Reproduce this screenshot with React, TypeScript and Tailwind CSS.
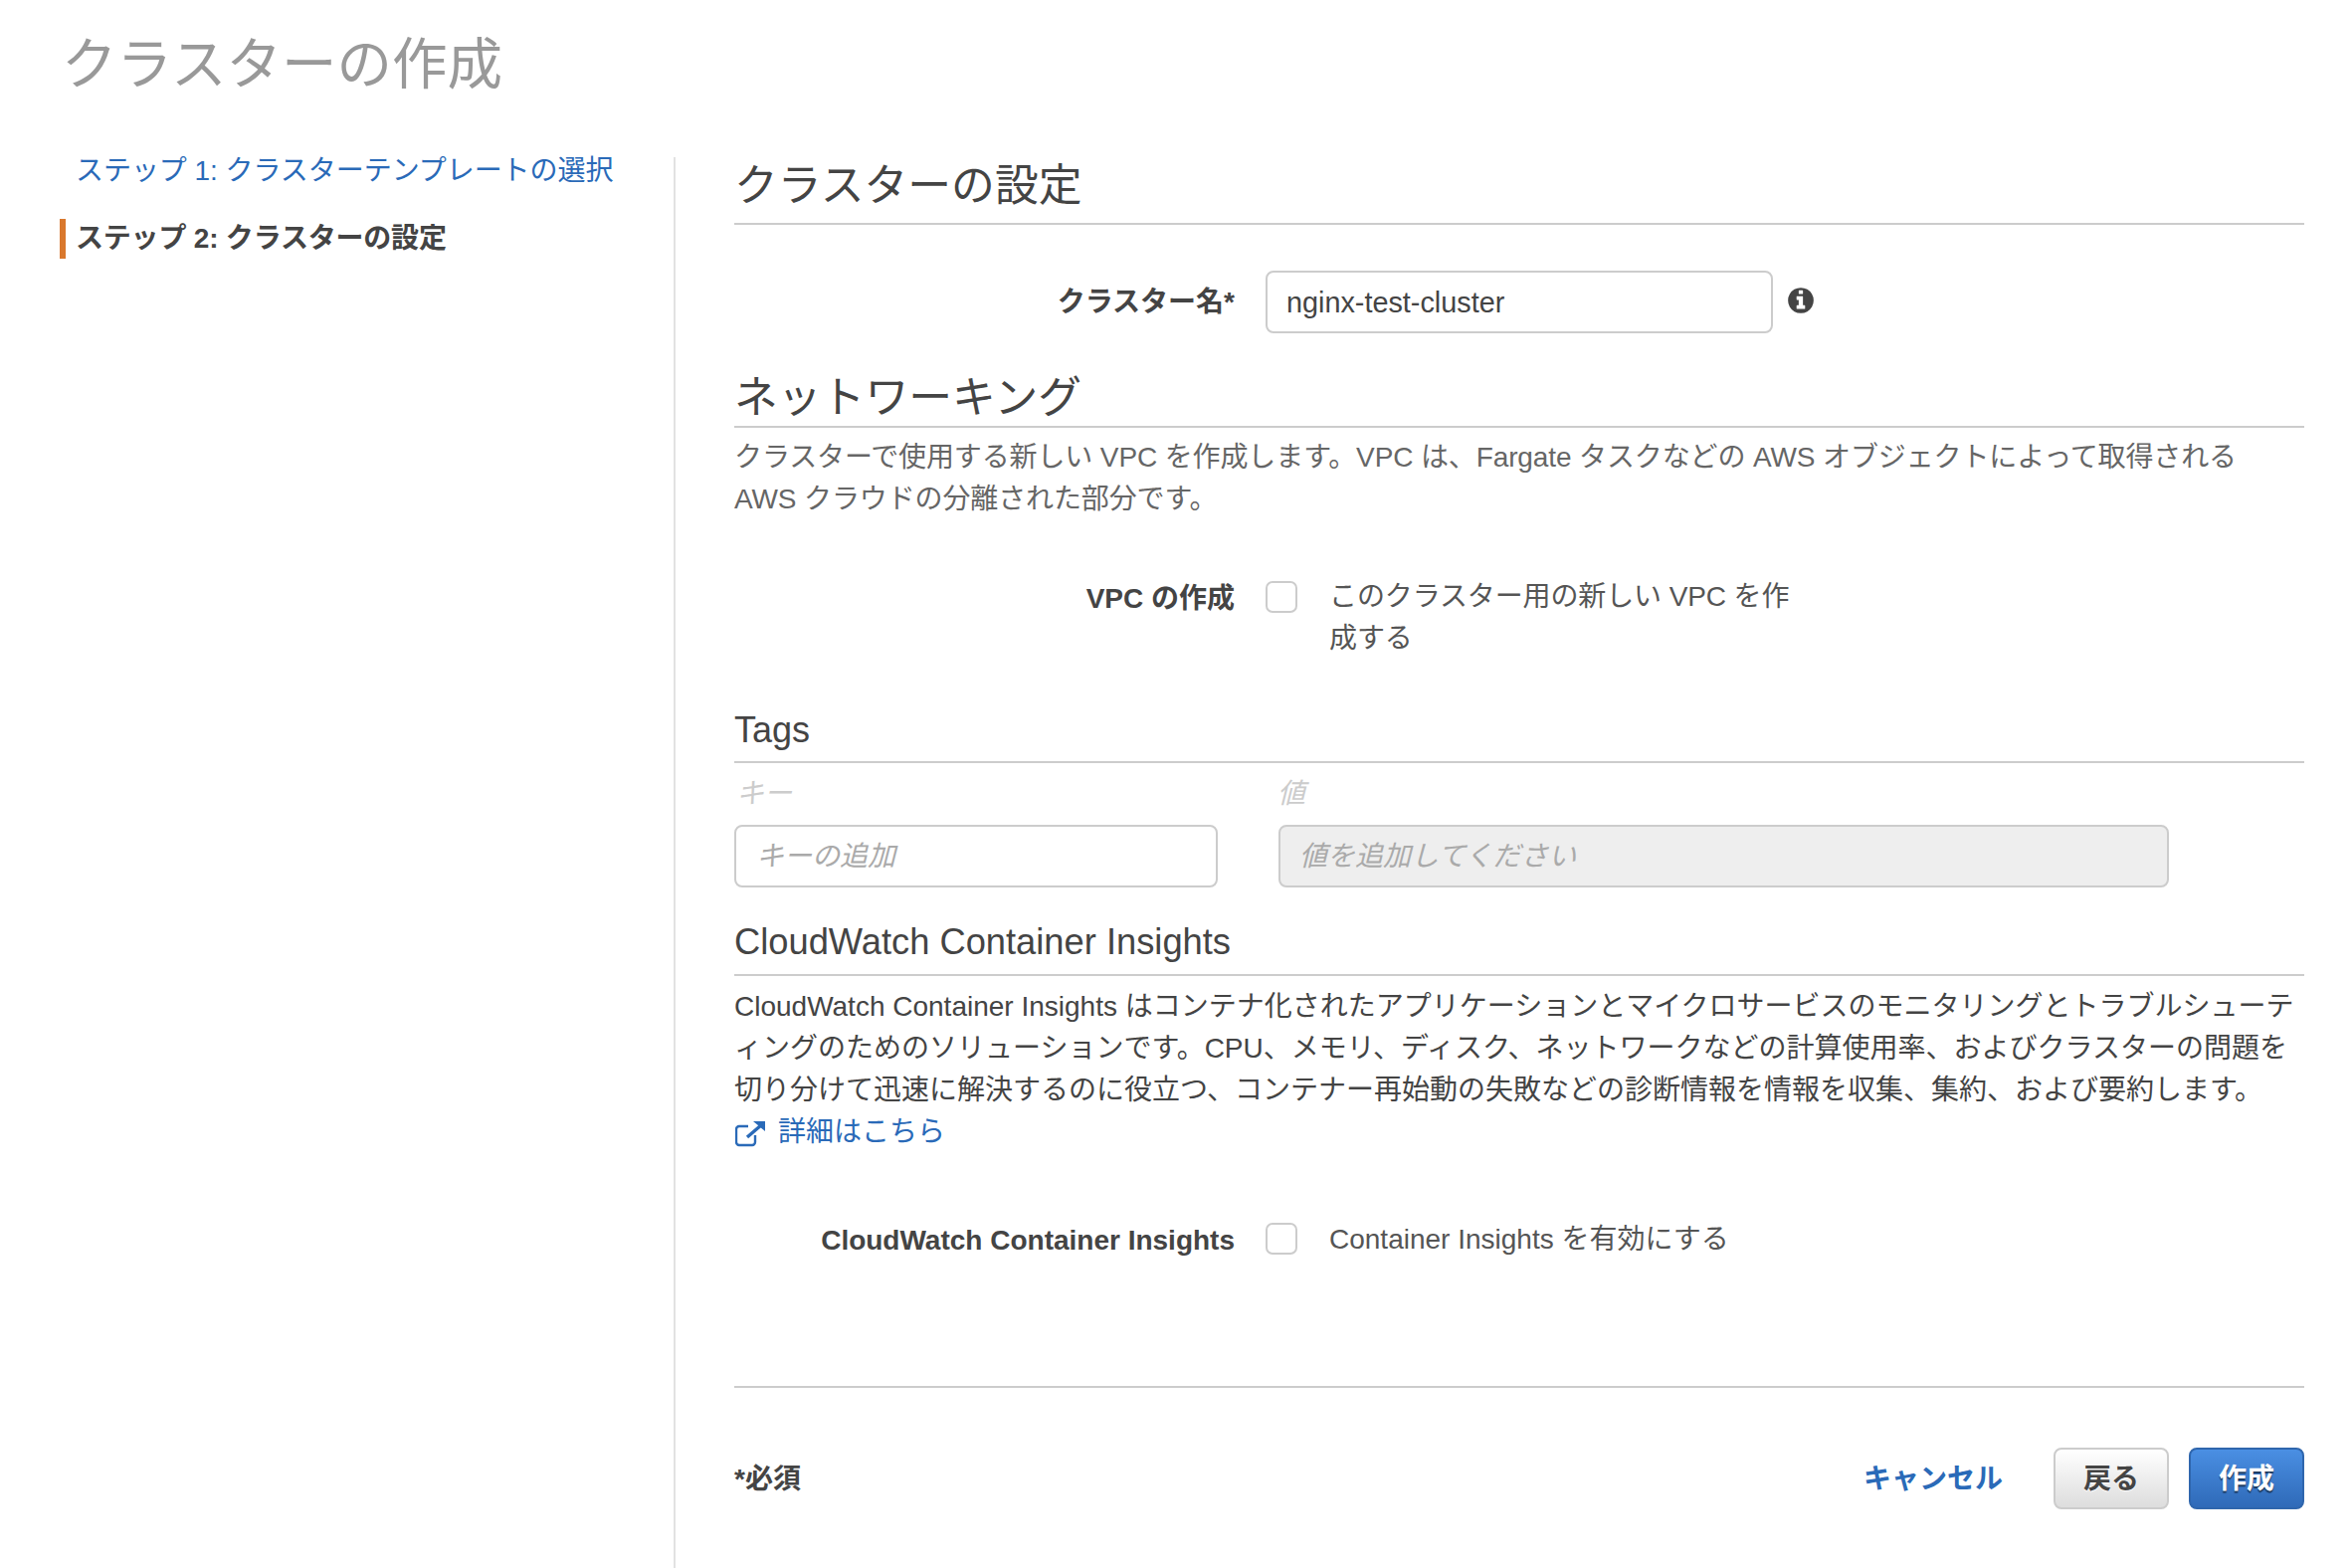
function SectionHeading({ children, className = "", size = "text-[44px]" }: { children: string; className?: string; size?: string }) {
  return <h2 className={`border-b-2 border-[#ccc] leading-[44px] text-[#444] ${size} ${className}`}>{children}</h2>
}

function Checkbox({ className = "" }: { className?: string }) {
  return <div className={`h-[32px] w-[32px] shrink-0 rounded-[7px] border-2 border-[#ccc] bg-white ${className}`} />
}

function FormLabel({ children, className = "" }: { children: string; className?: string }) {
  return <div className={`w-[503px] shrink-0 text-right text-[28px] font-bold leading-[42px] text-[#444] ${className}`}>{children}</div>
}

export default function App() {
  return (
    <div className="h-[1576px] overflow-hidden bg-white font-['Liberation_Sans','Noto_Sans_CJK_JP',sans-serif]">
      <h1 className="pl-[62px] pt-[33px] text-[55.5px] leading-[64px] text-[#999]">クラスターの作成</h1>

      <div className="mt-[61px] flex">
        {/* wizard steps */}
        <nav className="w-[677px] shrink-0 pl-[60px] text-[28px] leading-[40px]">
          <a className="-mt-[6px] block pl-[16px] tracking-[-0.05px] text-[#2a6ab8]">ステップ 1: クラスターテンプレートの選択</a>
          <div className="mt-[28px] border-l-[6px] border-[#d9782d] pl-[10px] font-bold tracking-[-0.2px] text-[#444]">ステップ 2: クラスターの設定</div>
        </nav>

        <main className="h-[1418px] w-[1639px] border-l-2 border-[#e2e2e2] pl-[59px]">
          <SectionHeading size="text-[43.8px]" className="pb-[15px] pt-[7px]">クラスターの設定</SectionHeading>

          <div className="mt-[46px] flex items-start">
            <FormLabel className="pt-[11px]">クラスター名*</FormLabel>
            <input
              readOnly
              value="nginx-test-cluster"
              className="ml-[31px] h-[63px] w-[510px] rounded-[8px] border-2 border-[#ccc] bg-white pl-[19px] pt-[1px] text-[28.8px] text-[#444] outline-none"
            />
            <svg viewBox="0 0 1792 1792" className="ml-[13px] mt-[15px] h-[30px] w-[30px] fill-[#444]">
              <path d="M1152 1376v-160q0-14-9-23t-23-9h-96v-512q0-14-9-23t-23-9h-320q-14 0-23 9t-9 23v160q0 14 9 23t23 9h96v320h-96q-14 0-23 9t-9 23v160q0 14 9 23t23 9h448q14 0 23-9t9-23zm-128-896v-160q0-14-9-23t-23-9h-192q-14 0-23 9t-9 23v160q0 14 9 23t23 9h192q14 0 23-9t9-23zm640 416q0 209-103 385.5t-279.5 279.5-385.5 103-385.5-103-279.5-279.5-103-385.5 103-385.5 279.5-279.5 385.5-103 385.5 103 279.5 279.5 103 385.5z" />
            </svg>
          </div>

          <SectionHeading size="text-[43.8px]" className="mt-[43px] pb-[6px]">ネットワーキング</SectionHeading>
          <p className="mt-[9px] text-[28px] leading-[42px] tracking-[-0.12px] text-[#666]">
            クラスターで使用する新しい VPC を作成します。VPC は、Fargate タスクなどの AWS オブジェクトによって取得される AWS クラウドの分離された部分です。
          </p>

          <div className="mt-[55px] flex items-start">
            <FormLabel className="pt-[3px]">VPC の作成</FormLabel>
            <div className="ml-[31px]">
              <Checkbox className="mt-[6px]" />
            </div>
            <div className="ml-[32px] w-[466px] pt-[1px] text-[28px] leading-[42px] tracking-[-0.12px] text-[#555]">このクラスター用の新しい VPC を作成する</div>
          </div>

          <SectionHeading size="text-[36px]" className="mt-[49px] pb-[9px]">Tags</SectionHeading>
          <div className="mt-[10px] flex text-[28px] italic leading-[42px] text-[#ccc]">
            <div className="w-[546px] pl-[2px]">キー</div>
            <div>値</div>
          </div>
          <div className="mt-[10px] flex">
            <input
              readOnly
              placeholder="キーの追加"
              className="h-[63px] w-[486px] rounded-[8px] border-2 border-[#ccc] bg-white pl-[20px] pt-[1px] text-[28px] outline-none placeholder:italic placeholder:text-[#aaa]"
            />
            <input
              readOnly
              placeholder="値を追加してください"
              className="ml-[61px] h-[63px] w-[895px] rounded-[8px] border-2 border-[#ccc] bg-[#eee] pl-[19px] pt-[1px] text-[28px] outline-none placeholder:italic placeholder:text-[#aaa]"
            />
          </div>

          <SectionHeading size="text-[36.3px]" className="mt-[33px] pb-[10px]">CloudWatch Container Insights</SectionHeading>
          <p className="mt-[10px] text-[28px] leading-[42px] text-[#444]">
            CloudWatch Container Insights はコンテナ化されたアプリケーションとマイクロサービスのモニタリングとトラブルシューティングのためのソリューションです。CPU、メモリ、ディスク、ネットワークなどの計算使用率、およびクラスターの問題を切り分けて迅速に解決するのに役立つ、コンテナー再始動の失敗などの診断情報を情報を収集、集約、および要約します。
          </p>
          <a className="flex items-center text-[28px] leading-[42px] text-[#2a6ab8]">
            <svg viewBox="0 0 30 26" className="ml-[1px] mt-[4px] h-[26px] w-[30px]" fill="none" stroke="currentColor" strokeWidth="2.4">
              <path d="M13 5H4a3 3 0 0 0-3 3v13a3 3 0 0 0 3 3h13a3 3 0 0 0 3-3v-7" />
              <path d="M12 16 26 4" strokeWidth="3.4" />
              <path d="M18 0h12v10z" fill="currentColor" stroke="none" />
            </svg>
            <span className="ml-[13px]">詳細はこちら</span>
          </a>

          <div className="mt-[67px] flex items-start">
            <FormLabel>CloudWatch Container Insights</FormLabel>
            <div className="ml-[31px]">
              <Checkbox className="mt-[3px]" />
            </div>
            <div className="ml-[32px] -mt-[1px] text-[28px] leading-[42px] text-[#555]">Container Insights を有効にする</div>
          </div>

          <div className="mt-[125px] border-t-2 border-[#ccc]" />

          <div className="mt-[60px] flex items-center">
            <div className="mt-[2px] text-[28px] font-bold text-[#444]">*必須</div>
            <a className="ml-auto mt-[2px] text-[28px] font-bold text-[#2a6ab8]">キャンセル</a>
            <button className="ml-[51px] h-[62px] w-[116px] rounded-[8px] border-2 border-[#ccc] bg-gradient-to-b from-white to-[#ddd] pt-[1px] text-[28px] font-bold text-[#444] [text-shadow:0_1px_1px_white]">
              戻る
            </button>
            <button className="ml-[20px] h-[62px] w-[116px] rounded-[8px] border-2 border-[#2f66ad] bg-gradient-to-b from-[#4a8fe3] to-[#2f6ab8] pt-[1px] text-[28px] font-bold text-white [text-shadow:0_2px_1px_rgba(0,0,0,0.55)]">
              作成
            </button>
          </div>
        </main>
      </div>
    </div>
  )
}
